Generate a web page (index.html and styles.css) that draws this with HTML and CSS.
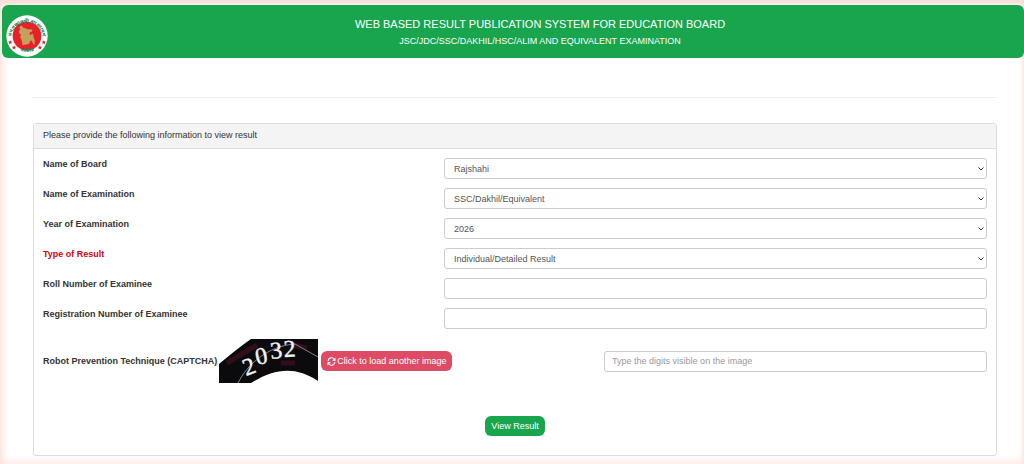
FILE: index.html
```
<!DOCTYPE html>
<html lang="en">
  <head>
    <meta charset="UTF-8" />
    <meta name="viewport" content="width=device-width, initial-scale=1.0" />
    <title>Web Based Result Publication System for Education Board</title>
    <link rel="stylesheet" href="styles.css">
  </head>
  <body>
    <header class="header">
      <svg class="logo" viewBox="0 0 120 120" role="img" aria-label="Government seal of Bangladesh">
        <defs>
          <path id="arcTop" d="M16 66 A44 44 0 1 1 104 66" />
          <path id="arcBottom" d="M14 78 A52 52 0 0 0 106 78" />
        </defs>
        <circle cx="60" cy="60" r="59" fill="#fff" />
        <circle cx="60" cy="60" r="41" fill="#e8202a" />
        <path fill="#c3a05c" d="M41 31 l6 1 3 5 6 1 4 3 8 0 8 1 -2 5 -6 3 -1 5 4 3 3 -5 4 3 1 8 3 9 0 10 -4 2 -3 -9 -4 -4 -3 5 -2 5 -6 2 -7 1 -6 1 -1 -9 -2 -8 -4 -6 3 -6 -5 -5 -1 -6 4 -4 -3 -4z" />
        <text class="logo-text"><textPath href="#arcTop" startOffset="50%">গণপ্রজাতন্ত্রী বাংলাদেশ</textPath></text>
        <text class="logo-text"><textPath href="#arcBottom" startOffset="50%">সরকার</textPath></text>
        <g fill="#e8202a">
          <path id="star" d="M12 72 l2 4 4 0 -3 3 1 5 -4 -3 -4 3 1 -5 -3 -3 4 0z" />
          <use href="#star" x="11" y="15" />
          <use href="#star" x="96" />
          <use href="#star" x="85" y="15" />
        </g>
      </svg>
      <div class="titles">
        <h1>WEB BASED RESULT PUBLICATION SYSTEM FOR EDUCATION BOARD</h1>
        <p>JSC/JDC/SSC/DAKHIL/HSC/ALIM AND EQUIVALENT EXAMINATION</p>
      </div>
    </header>

    <main class="container">
      <hr>
      <form class="panel">
        <div class="panel-heading">Please provide the following information to view result</div>
        <div class="panel-body">
          <div class="form-row">
            <label for="board">Name of Board</label>
            <select class="form-control" id="board"><option>Rajshahi</option></select>
          </div>
          <div class="form-row">
            <label for="exam">Name of Examination</label>
            <select class="form-control" id="exam"><option>SSC/Dakhil/Equivalent</option></select>
          </div>
          <div class="form-row">
            <label for="year">Year of Examination</label>
            <select class="form-control" id="year"><option>2026</option></select>
          </div>
          <div class="form-row">
            <label class="required" for="type">Type of Result</label>
            <select class="form-control" id="type"><option>Individual/Detailed Result</option></select>
          </div>
          <div class="form-row">
            <label for="roll">Roll Number of Examinee</label>
            <input class="form-control" type="text" id="roll">
          </div>
          <div class="form-row">
            <label for="reg">Registration Number of Examinee</label>
            <input class="form-control" type="text" id="reg">
          </div>

          <!-- Captcha -->
          <div class="captcha-row">
            <div class="captcha">
              <label for="captcha">Robot Prevention Technique (CAPTCHA)</label>
              <svg class="captcha-image" viewBox="0 0 99 44" role="img" aria-label="Captcha image">
                <path fill="#0b0a0c" d="M0 25 C10 17 20 8 32 0 H99 V42 C76 26 54 30 32 44 H0z" />
                <path d="M8 24 L38 6 M62 24 h14 M74 6 l14 3" stroke="#5a1028" stroke-width="5" opacity="0.5" />
                <path d="M19 44 C28 26 48 7 76 5 L99 18" fill="none" stroke="#76868c" stroke-width="1" />
                <text class="captcha-text" x="27 38 52 65" y="37 26 20 18" rotate="-20 -12 -6 -3">2032</text>
              </svg>
              <button class="btn btn-danger" type="button">
                <svg class="icon" viewBox="0 0 16 16" aria-hidden="true">
                  <path d="M2 7 A6 6 0 0 1 13 4 M14 9 A6 6 0 0 1 3 12" fill="none" stroke="#fff" stroke-width="2" />
                  <path d="M15 1 V7 H9z M1 15 V9 H7z" fill="#fff" />
                </svg>
                Click to load another image
              </button>
            </div>
            <input class="form-control" type="text" id="captcha" placeholder="Type the digits visible on the image">
          </div>

          <div class="actions">
            <button class="btn btn-success" type="submit">View Result</button>
          </div>
        </div>
      </form>
    </main>
  </body>
</html>
```
FILE: styles.css
```
* {
  box-sizing: border-box;
}

html {
  min-height: 100%;
  background-color: #fff;
  box-shadow: inset 0 4px 4px #f8dcd6, inset 3px 0 10px #fdeae6, inset 0 -3px 10px #fdf0ec;
}

body {
  margin: 0;
  padding: 5px 0 8px 2px;
  font-family: "Liberation Sans", Arial, sans-serif;
  font-size: 9px;
  line-height: 13px;
  color: #333;
}

.header {
  display: flex;
  align-items: center;
  height: 53px;
  padding: 0 4px;
  background-color: #18a54e;
  border-radius: 6px;
  color: #fff;
}

.logo {
  width: 42px;
  height: 42px;
  margin-top: 8px;
}

.logo-text {
  font-family: "Noto Sans Bengali", "Noto Sans", sans-serif;
  font-size: 14px;
  font-weight: bold;
  text-anchor: middle;
  fill: #18804a;
}

.titles {
  flex: 1;
  padding: 1px 0 0 12px;
  text-align: center;
}

.titles h1 {
  margin: 0 0 4px;
  font-size: 11px;
  font-weight: normal;
  line-height: 14px;
}

.titles p {
  margin: 0;
}

.container {
  padding: 39px 27px 0 31px;
}

hr {
  margin: 0 0 25px;
  border: 0;
  border-top: 1px solid #eee;
}

.panel {
  border: 1px solid #ddd;
  border-radius: 3px;
}

.panel-heading {
  padding: 5px 9px 6px;
  background-color: #f4f4f4;
  border-bottom: 1px solid #ddd;
}

.panel-body {
  padding: 9px 9px 19px;
}

.form-row {
  display: grid;
  grid-template-columns: 5fr 7fr;
  column-gap: 13px;
  margin-bottom: 9px;
}

label {
  font-weight: bold;
}

.required {
  color: #d9000d;
}

.form-control {
  width: 100%;
  height: 21px;
  padding: 0 7px;
  border: 1px solid #ccc;
  border-radius: 3px;
  background-color: #fff;
  font-family: inherit;
  font-size: 9px;
  color: #555;
}

select.form-control {
  padding: 0 9px;
  appearance: none;
  background-image: url("data:image/svg+xml,%3Csvg xmlns='http://www.w3.org/2000/svg' viewBox='0 0 6 4'%3E%3Cpath d='M.5.5 3 3 5.5.5' fill='none' stroke='%23333'/%3E%3C/svg%3E");
  background-repeat: no-repeat;
  background-position: right 2px center;
  background-size: 6px 4px;
}

.form-control::placeholder {
  color: #999;
}

.captcha-row {
  display: grid;
  grid-template-columns: 7fr 5fr;
  column-gap: 25px;
  align-items: center;
  padding-top: 1px;
}

.captcha {
  display: flex;
  align-items: center;
}

.captcha-image {
  width: 99px;
  height: 44px;
  margin: 0 3px 0 2px;
}

.captcha-text {
  font-family: "Liberation Serif", serif;
  font-size: 24px;
  fill: #f4f4f4;
  stroke: #f4f4f4;
  stroke-width: 0.4px;
}

.btn {
  height: 20px;
  padding: 0 6px;
  border: none;
  border-radius: 6px;
  font-family: inherit;
  font-size: 9px;
  color: #fff;
  cursor: pointer;
}

.btn-danger {
  display: flex;
  align-items: center;
  gap: 1px;
  background-color: #dd4b65;
}

.btn-success {
  background-color: #18a54e;
}

.icon {
  width: 9px;
  height: 9px;
}

.actions {
  margin-top: 33px;
  text-align: center;
}
```
